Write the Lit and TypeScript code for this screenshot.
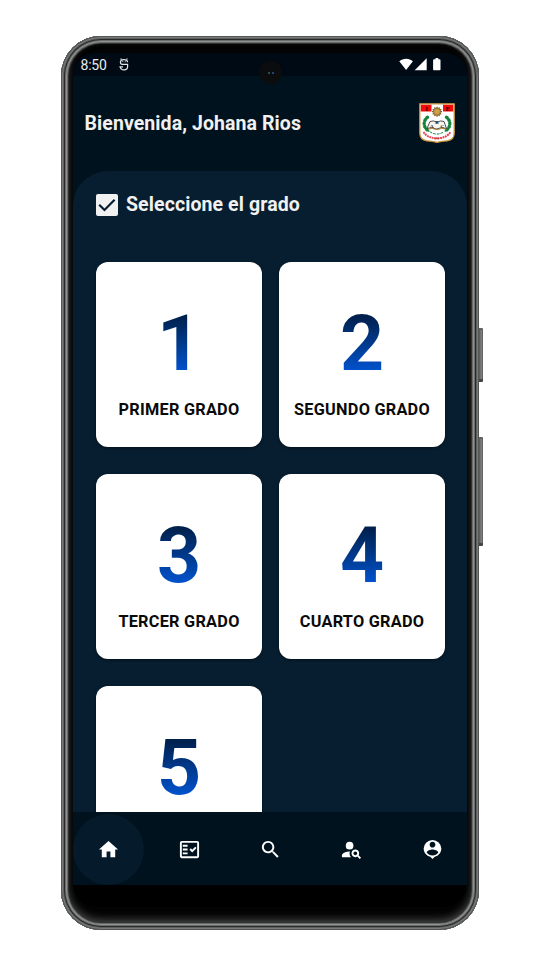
import { LitElement, html, css, svg } from "lit";
import { customElement, property } from "lit/decorators.js";

const icons: Record<string, unknown> = {
  home: svg`<path d="M10 20v-6h4v6h5v-8h3L12 3 2 12h3v8z"/>`,
  list: svg`<path fill-rule="evenodd" d="M20 3H4c-1.1 0-2 .9-2 2v14c0 1.1.9 2 2 2h16c1.1 0 2-.9 2-2V5c0-1.1-.9-2-2-2zm0 16H4V5h16v14z"/><path d="M19.41 10.42 17.99 9l-3.17 3.17-1.41-1.42L12 12.16 14.82 15zM5 7h5v2H5zM5 11h5v2H5zM5 15h5v2H5z"/>`,
  search: svg`<path d="M15.5 14h-.79l-.28-.27C15.41 12.59 16 11.11 16 9.5 16 5.91 13.09 3 9.5 3S3 5.91 3 9.5 5.91 16 9.5 16c1.61 0 3.09-.59 4.23-1.57l.27.28v.79l5 4.99L20.49 19l-4.99-5zm-6 0C7.01 14 5 11.99 5 9.5S7.01 5 9.5 5 14 7.01 14 9.5 11.99 14 9.5 14z"/>`,
  people: svg`<circle cx="10" cy="8" r="4"/><path d="M10.35 14.01C7.62 13.91 2 15.27 2 18v2h9.54c-2.47-2.76-1.23-5.89-1.19-5.99z"/><path d="M19.43 18.02c.36-.59.57-1.28.57-2.02 0-2.21-1.79-4-4-4s-4 1.79-4 4 1.79 4 4 4c.74 0 1.43-.22 2.02-.57L20.59 22 22 20.59l-2.57-2.57zM16 18c-1.1 0-2-.9-2-2s.9-2 2-2 2 .9 2 2-.9 2-2 2z"/>`,
  profile: svg`<path d="M12 2a9.2 9.2 0 0 0-9.2 9c0 4.17 2.84 7.67 6.89 8.69L12 22l2.31-2.31C18.36 18.67 21.2 15.17 21.2 11A9.2 9.2 0 0 0 12 2zm0 2c1.66 0 3 1.34 3 3s-1.34 3-3 3-3-1.34-3-3 1.34-3 3-3zm0 14.3c-2.5 0-4.71-1.28-6-3.22.03-1.99 4-3.08 6-3.08 1.99 0 5.97 1.09 6 3.08-1.29 1.94-3.5 3.22-6 3.22z"/>`,
};

@customElement("status-bar")
class StatusBar extends LitElement {
  static styles = css`
    :host { display: flex; align-items: center; height: 23px; padding: 0 26px 0 7.5px; background: #000a14; color: #e9edf0; font-size: 14px; }
    .time { line-height: 23px; margin-right: 11.5px; padding-top: 1px; width: 27px; white-space: nowrap; letter-spacing: -0.2px; }
    .debug { width: 10px; height: 13px; }
    .system { width: 42px; height: 13px; margin-left: auto; }
  `;
  render() {
    return html`
      <span class="time">8:50</span>
      <svg class="debug" viewBox="0 0 10 13" fill="none" stroke="#dfe4e8" stroke-width="1.2">
        <path d="M2.300 1.500 1.700.500M7.700 1.500 8.300.500M8.600 4.300C8.600.600 1.400.600 1.400 4.300q0 2 1.800 2h5.400v2.500c0 4-7.200 4-7.200.4M.4 8.800h3.600"/>
        <path d="M3.300 3.700h.9M5.800 3.700h.9" stroke-width="1"/>
      </svg>
      <svg class="system" viewBox="0 0 42 13" fill="#fff">
        <path d="M.3 3.200C3.800-.2 10.400-.2 13.900 3.200L7.100 12z"/>
        <path d="M27.700.3v12H15.700z"/>
        <path d="M36.500 0h2.800v1.200h1.200q1 0 1 1v9.300q0 .8-.8.8h-5.800q-.8 0-.8-.8V2.200q0-1 1-1h1.400z"/>
      </svg>`;
  }
}

@customElement("school-crest")
class SchoolCrest extends LitElement {
  static styles = css`
    :host { display: block; width: 36px; height: 40px; }
    .crest { display: block; width: 36px; height: 40px; }
    .letter { font: bold 7px "Liberation Serif", serif; fill: #3a0000; text-anchor: middle; }
    .small { font: bold 5px "Liberation Serif", serif; fill: #111; text-anchor: middle; }
  `;
  render() {
    const rays = Array.from({ length: 12 }, (_, i) => i * 30);
    return html`<svg class="crest" viewBox="0 0 36 40">
      <path d="M.8.800h34.400v29.500q0 6.500-7 7.500-6 .2-10.200 1.500-4-1.300-10.200-1.500-7-1-7-7.500z" fill="#fff" stroke="#c9983a" stroke-width="1.300"/>
      <path d="M1.800 1.800h10.700v6.600H1.800zM24 1.800h10.200v6.600H24z" fill="#f80a0a"/>
      <text class="letter" x="7.500" y="7.500">I</text>
      <text class="letter" x="28.800" y="7.500">E</text>
      <g stroke="#86641e" stroke-width="1.300">
        ${rays.map((a) => svg`<path d="M18 3.700v2.300" transform="rotate(${a} 18 8.700)"/>`)}
      </g>
      <circle cx="18" cy="8.700" r="3.500" fill="#cfa04a" stroke="#765a25" stroke-width=".8"/>
      <g fill="none" stroke="#16843c" stroke-linecap="round">
        <path d="M8.500 14.200C3.800 18 4 24.500 9.700 28M27.500 14.200c4.700 3.800 4.500 10.300-1.200 13.800" stroke-width="3.400" stroke-dasharray=".8 2.600"/>
        <path d="M8.500 14.200C3.800 18 4 24.500 9.700 28M27.500 14.200c4.700 3.800 4.500 10.300-1.200 13.800" stroke-width="1.500"/>
        <path d="M11 28.800q7 4.500 14 0" stroke-width="1" stroke-dasharray="2 1.800"/>
      </g>
      <path d="M11 18.500q3.500-1.500 7 .8 3.500-2.300 7-.8l2.500 7q-5-2-10 .5-5-2.500-9.500-.5z" fill="#f7f5ee" stroke="#222" stroke-width=".8"/>
      <path d="M8.500 26.200q5-1.700 9.500.5 4.500-2.200 9.500-.5" fill="none" stroke="#a77a2c" stroke-width=".9"/>
      <text class="small" x="12.800" y="24.500">A</text>
      <text class="small" x="18" y="20.800">B</text>
      <text class="small" x="23.200" y="24.500">C</text>
      <path d="M4.500 29q3.500 5.800 13.500 6.500 10-.7 13.500-6.500" fill="none" stroke="#ed3b4d" stroke-width="1.900" stroke-dasharray="1.900 .7"/>
      <path d="M15.500 35.300h5" stroke="#b32" stroke-width="1.500" stroke-dasharray="1 .6"/>
    </svg>`;
  }
}

@customElement("grade-card")
class GradeCard extends LitElement {
  @property() number = "";
  @property() label = "";
  static styles = css`
    :host { display: flex; flex-direction: column; align-items: center; box-sizing: border-box; height: 185px; padding-top: 37px; border-radius: 12px; background: #fff; box-shadow: 0 1px 3px rgba(0,0,0,.5); }
    .number { font-weight: 700; font-size: 77px; line-height: 90px; color: transparent; background: linear-gradient(#00204c 17px, #0056d6 76px); -webkit-background-clip: text; background-clip: text; }
    .label { margin-top: 11px; font-weight: 700; font-size: 16.3px; line-height: 20px; color: #0a0a0a; white-space: nowrap; letter-spacing: .25px; }
  `;
  render() {
    return html`<span class="number">${this.number}</span>${this.label ? html`<span class="label">${this.label}</span>` : null}`;
  }
}

@customElement("nav-bar")
class NavBar extends LitElement {
  static styles = css`
    :host { display: flex; justify-content: space-between; align-items: center; height: 73px; margin-right: -1px; background: #00121e; }
    .item { display: grid; place-items: center; width: 71px; height: 71px; border-radius: 50%; margin-top: 2px; }
    .active { background: #051b2b; }
    .icon { width: 23px; height: 23px; fill: #fff; margin-top: -1px; }
  `;
  render() {
    return ["home", "list", "search", "people", "profile"].map(
      (name, i) => html`<div class="item ${i === 0 ? "active" : ""}"><svg class="icon" viewBox="0 0 24 24">${icons[name]}</svg></div>`
    );
  }
}

@customElement("app-root")
class AppRoot extends LitElement {
  static styles = css`
    :host { display: block; box-sizing: border-box; width: 540px; height: 960px; padding: 36px 61px 0; background: #fff; overflow: hidden; font-family: Roboto, sans-serif; }
    .phone { position: relative; box-sizing: border-box; width: 418px; height: 894px; padding: 17px 12px 23px; border-radius: 40px;
      background: #030303;
      box-shadow: inset 0 0 0 1px #555, inset 0 0 0 2px #777b79, inset 0 0 0 3px #5d5f5e, inset 0 0 0 4px #282928, inset 0 0 0 5px #6c6e6d, inset 0 0 0 6px #8f9190, inset 0 0 0 7px #686a69, inset 0 0 0 8px #303131, inset 0 -4px 8px 6px #4c4c4c; }
    .side { position: absolute; left: 418px; width: 4px; box-sizing: border-box; background: linear-gradient(90deg, #555, #818181 60%, #555); border-top: 2px solid #626262; border-bottom: 3px solid #444; border-radius: 0 1px 1px 0; }
    .power { top: 292px; height: 54px; }
    .volume { top: 401px; height: 109px; }
    .camera { position: absolute; left: 198px; top: 25px; width: 23px; height: 23px; border-radius: 50%; background: #0b0c0d; display: flex; align-items: center; justify-content: center; gap: 2px; }
    .lens { width: 2px; height: 2px; background: #2a6a75; border-radius: 50%; }
    .blue { background: #34509a; }
    .screen { display: flex; flex-direction: column; height: 854px; border-radius: 22px; overflow: hidden; background: #00121e; }
    .header { display: flex; align-items: center; justify-content: space-between; box-sizing: border-box; height: 95px; flex: none; padding: 0 12.500px 1px 11.500px; color: #f1f1f1; }
    .greeting { font-size: 19.500px; font-weight: 700; white-space: nowrap; letter-spacing: .08px; }
    .content { flex: 1; min-height: 0; overflow: hidden; padding: 0 22px 0 23px; border-radius: 35px 35px 0 0; background: #071e30; }
    .heading { display: flex; align-items: center; height: 67px; color: #f1f1f1; font-size: 19.500px; font-weight: 700; letter-spacing: .1px; white-space: nowrap; }
    .check { width: 22px; height: 22px; margin: 0 8.5px 0 -.5px; }
    .grid { display: grid; grid-template-columns: 1fr 1fr; gap: 27px 17px; padding-top: 24px; }
    .gesture { flex: none; height: 22px; background: #000; }
  `;
  render() {
    const grades = ["PRIMER GRADO", "SEGUNDO GRADO", "TERCER GRADO", "CUARTO GRADO", ""];
    return html`<div class="phone">
      <div class="screen">
        <status-bar></status-bar>
        <header class="header"><span class="greeting">Bienvenida, Johana Rios</span><school-crest></school-crest></header>
        <main class="content">
          <div class="heading">
            <svg class="check" viewBox="0 0 22 22"><rect width="22" height="22" rx="2" fill="#f1f1f1"/><path d="m3.200 10.700 5.300 5.300L18.600 5.700" fill="none" stroke="#071e30" stroke-width="2.200"/></svg>
            <span>Seleccione el grado</span>
          </div>
          <div class="grid">
            ${grades.map((g, i) => html`<grade-card number=${i + 1} label=${g}></grade-card>`)}
          </div>
        </main>
        <nav-bar></nav-bar>
        <div class="gesture"></div>
      </div>
      <div class="camera"><i class="lens"></i><i class="lens blue"></i></div>
      <div class="side power"></div>
      <div class="side volume"></div>
    </div>`;
  }
}
